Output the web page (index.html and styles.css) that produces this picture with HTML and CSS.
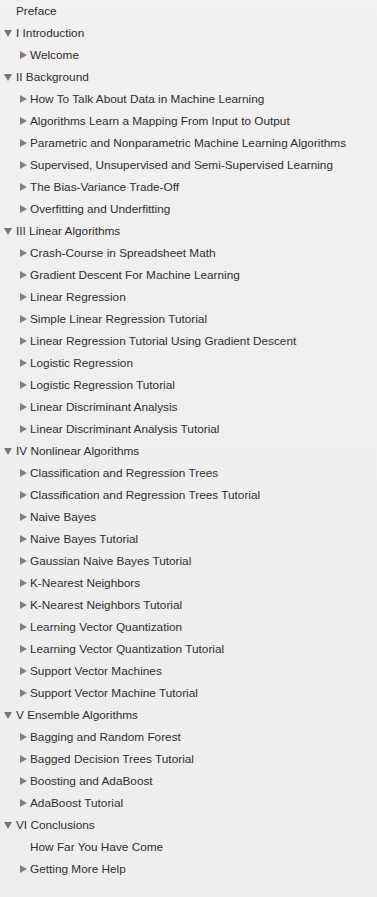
FILE: index.html
```html
<!DOCTYPE html>
<html lang="en">
<head>
    <meta charset="UTF-8">
    <meta name="viewport" content="width=device-width, initial-scale=1.0">
    <title>Contents</title>
    <link rel="stylesheet" href="styles.css">
</head>
<body>
    <ul class="toc">
        <li class="row top leaf">Preface</li>
        <li class="row top open"><span class="arrow down"></span>I Introduction</li>
        <li class="row sub"><span class="arrow right"></span>Welcome</li>
        <li class="row top open"><span class="arrow down"></span>II Background</li>
        <li class="row sub"><span class="arrow right"></span>How To Talk About Data in Machine Learning</li>
        <li class="row sub"><span class="arrow right"></span>Algorithms Learn a Mapping From Input to Output</li>
        <li class="row sub"><span class="arrow right"></span>Parametric and Nonparametric Machine Learning Algorithms</li>
        <li class="row sub"><span class="arrow right"></span>Supervised, Unsupervised and Semi-Supervised Learning</li>
        <li class="row sub"><span class="arrow right"></span>The Bias-Variance Trade-Off</li>
        <li class="row sub"><span class="arrow right"></span>Overfitting and Underfitting</li>
        <li class="row top open"><span class="arrow down"></span>III Linear Algorithms</li>
        <li class="row sub"><span class="arrow right"></span>Crash-Course in Spreadsheet Math</li>
        <li class="row sub"><span class="arrow right"></span>Gradient Descent For Machine Learning</li>
        <li class="row sub"><span class="arrow right"></span>Linear Regression</li>
        <li class="row sub"><span class="arrow right"></span>Simple Linear Regression Tutorial</li>
        <li class="row sub"><span class="arrow right"></span>Linear Regression Tutorial Using Gradient Descent</li>
        <li class="row sub"><span class="arrow right"></span>Logistic Regression</li>
        <li class="row sub"><span class="arrow right"></span>Logistic Regression Tutorial</li>
        <li class="row sub"><span class="arrow right"></span>Linear Discriminant Analysis</li>
        <li class="row sub"><span class="arrow right"></span>Linear Discriminant Analysis Tutorial</li>
        <li class="row top open"><span class="arrow down"></span>IV Nonlinear Algorithms</li>
        <li class="row sub"><span class="arrow right"></span>Classification and Regression Trees</li>
        <li class="row sub"><span class="arrow right"></span>Classification and Regression Trees Tutorial</li>
        <li class="row sub"><span class="arrow right"></span>Naive Bayes</li>
        <li class="row sub"><span class="arrow right"></span>Naive Bayes Tutorial</li>
        <li class="row sub"><span class="arrow right"></span>Gaussian Naive Bayes Tutorial</li>
        <li class="row sub"><span class="arrow right"></span>K-Nearest Neighbors</li>
        <li class="row sub"><span class="arrow right"></span>K-Nearest Neighbors Tutorial</li>
        <li class="row sub"><span class="arrow right"></span>Learning Vector Quantization</li>
        <li class="row sub"><span class="arrow right"></span>Learning Vector Quantization Tutorial</li>
        <li class="row sub"><span class="arrow right"></span>Support Vector Machines</li>
        <li class="row sub"><span class="arrow right"></span>Support Vector Machine Tutorial</li>
        <li class="row top open"><span class="arrow down"></span>V Ensemble Algorithms</li>
        <li class="row sub"><span class="arrow right"></span>Bagging and Random Forest</li>
        <li class="row sub"><span class="arrow right"></span>Bagged Decision Trees Tutorial</li>
        <li class="row sub"><span class="arrow right"></span>Boosting and AdaBoost</li>
        <li class="row sub"><span class="arrow right"></span>AdaBoost Tutorial</li>
        <li class="row top open"><span class="arrow down"></span>VI Conclusions</li>
        <li class="row sub leaf">How Far You Have Come</li>
        <li class="row sub"><span class="arrow right"></span>Getting More Help</li>
    </ul>
</body>
</html>
```

FILE: styles.css
```css
body {
    margin: 0;
    height: 897px;
    background-color: #f0efef;
    background-image: linear-gradient(#f2f0f0, #eeeeee);
    font-family: 'Liberation Sans', Arial, sans-serif;
    font-size: 11.8px;
    color: #2e2e2e;
}
.toc {
    list-style: none;
    margin: 0;
    padding: 0;
}
.row {
    display: flex;
    align-items: center;
    height: 22px;
    white-space: nowrap;
}
.top {
    padding-left: 4px;
}
.sub {
    padding-left: 20px;
}
.top.leaf {
    padding-left: 16px;
}
.sub.leaf {
    padding-left: 30px;
}
.arrow {
    width: 0;
    height: 0;
    flex-shrink: 0;
}
.arrow.down {
    border-left: 4px solid transparent;
    border-right: 4px solid transparent;
    border-top: 7px solid #777;
    margin-right: 4px;
    margin-top: 1px;
}
.arrow.right {
    border-top: 4px solid transparent;
    border-bottom: 4px solid transparent;
    border-left: 7px solid #808080;
    margin-right: 3px;
}
```
